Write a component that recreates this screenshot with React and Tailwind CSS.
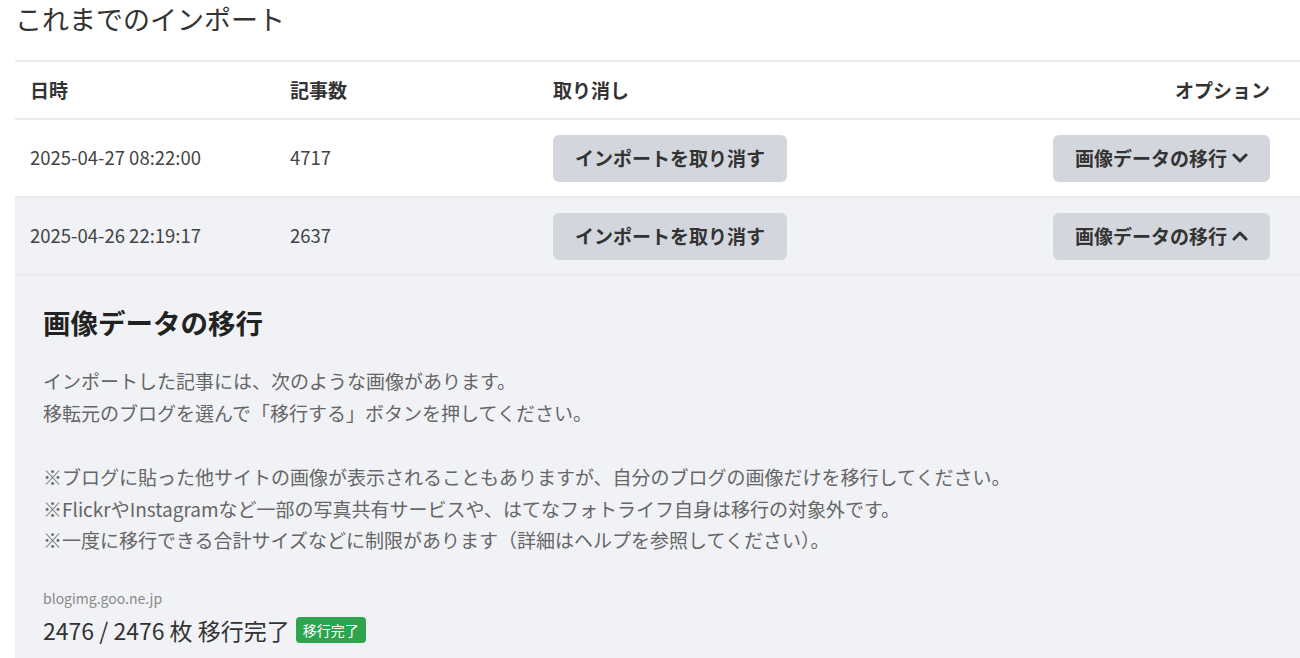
import React from "react";

const font = { fontFamily: '"Noto Sans CJK JP", "Noto Sans", sans-serif' };

function Chevron({ up }) {
  return (
    <svg width="16" height="12" viewBox="0 0 16 12" className="ml-[5px]">
      <polyline
        points={up ? "2,9 8,3 14,9" : "2,3 8,9 14,3"}
        fill="none"
        stroke="#333"
        strokeWidth="3"
        strokeLinecap="round"
        strokeLinejoin="round"
      />
    </svg>
  );
}

function Btn({ children, className = "" }) {
  return (
    <button
      className={`h-[47px] rounded-[6px] bg-[#d3d7dd] text-[19px] font-bold text-[#333] flex items-center justify-center ${className}`}
    >
      {children}
    </button>
  );
}

function Row({ date, count, up, gray }) {
  return (
    <div
      className={`grid grid-cols-[260px_263px_1fr_auto] items-center h-[78px] border-t-2 border-[#ebebeb] ${gray ? "bg-[#f0f2f5]" : "bg-white"}`}
    >
      <div className="pl-[15px] text-[18.5px] text-[#444]">{date}</div>
      <div className="pl-[15px] text-[18.5px] text-[#444]">{count}</div>
      <div className="pl-[15px]">
        <Btn className="w-[234px]">インポートを取り消す</Btn>
      </div>
      <div className="pr-[30px]">
        <Btn className="w-[217px]">
          画像データの移行
          <Chevron up={up} />
        </Btn>
      </div>
    </div>
  );
}

export default function App() {
  return (
    <div className="w-[1300px] h-[658px] overflow-hidden bg-white" style={font}>
      <div className="pl-[15px] pt-[2px]">
        <h1 className="text-[27px] leading-[34px] text-[#333] font-normal">これまでのインポート</h1>
      </div>
      <div className="ml-[15px] mt-[24px]">
        <div className="grid grid-cols-[260px_263px_1fr_auto] items-center h-[58px] border-t-2 border-[#ebebeb] font-bold text-[19px] text-[#333]">
          <div className="pl-[15px]">日時</div>
          <div className="pl-[15px]">記事数</div>
          <div className="pl-[15px]">取り消し</div>
          <div className="pr-[30px]">オプション</div>
        </div>
        <Row date="2025-04-27 08:22:00" count="4717" />
        <Row date="2025-04-26 22:19:17" count="2637" up gray />
        <div className="bg-[#f0f2f5] border-t-2 border-[#ebebeb] px-[28px] pt-[28px] h-[400px]">
          <h2 className="text-[27.5px] leading-[36px] font-bold text-[#222]">画像データの移行</h2>
          <div className="mt-[25px] text-[19px] leading-[31.5px] text-[#666]">
            <p>インポートした記事には、次のような画像があります。</p>
            <p>移転元のブログを選んで「移行する」ボタンを押してください。</p>
          </div>
          <div className="mt-[33px] text-[19px] leading-[31.5px] text-[#666]">
            <p>※ブログに貼った他サイトの画像が表示されることもありますが、自分のブログの画像だけを移行してください。</p>
            <p>※FlickrやInstagramなど一部の写真共有サービスや、はてなフォトライフ自身は移行の対象外です。</p>
            <p>※一度に移行できる合計サイズなどに制限があります（詳細はヘルプを参照してください）。</p>
          </div>
          <div className="mt-[32px] text-[14px] leading-[20px] text-[#888]">blogimg.goo.ne.jp</div>
          <div className="mt-[8px] flex items-center text-[23px] leading-[28px] text-[#333]">
            <span>2476 / 2476 枚 移行完了</span>
            <span className="ml-[6px] inline-flex items-center h-[26px] px-[7px] rounded-[4px] bg-[#2ea44f] text-white text-[14px]">移行完了</span>
          </div>
        </div>
      </div>
    </div>
  );
}
